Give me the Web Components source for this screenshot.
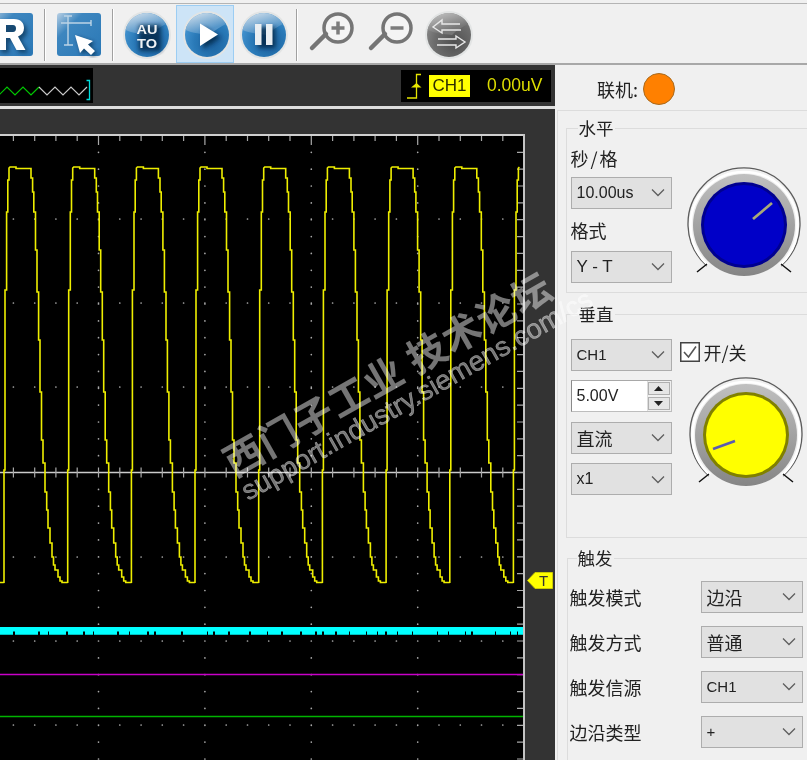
<!DOCTYPE html>
<html lang="zh-CN"><head><meta charset="utf-8"><title>Scope</title>
<style>
html,body{margin:0;padding:0;background:#f0f0f0;overflow:hidden}
body{width:807px;height:760px;font-family:"Liberation Sans","Noto Sans CJK SC",sans-serif}
</style></head><body>
<scope-app></scope-app>
<script>
const FONT='"Liberation Sans","Noto Sans CJK SC",sans-serif';
const CJK='"Noto Sans CJK SC","Liberation Sans",sans-serif';
function el(name,cls){customElements.define(name,cls)}
function shadow(host,html){host.attachShadow({mode:'open'}).innerHTML=html}
const DEFS=`<defs>
<radialGradient id="g" cx=".62" cy=".68" r=".75"><stop offset="0" stop-color="#1a609c"/><stop offset=".55" stop-color="#2a7ab8"/><stop offset="1" stop-color="#4a9ad6"/></radialGradient>
<radialGradient id="gg" cx=".62" cy=".68" r=".75"><stop offset="0" stop-color="#505050"/><stop offset=".6" stop-color="#6c6c6c"/><stop offset="1" stop-color="#8c8c8c"/></radialGradient>
<linearGradient id="hl" x1=".15" y1="0" x2=".55" y2=".75"><stop offset="0" stop-color="#d2e0ec"/><stop offset="1" stop-color="#5596c9"/></linearGradient>
<linearGradient id="hlg" x1=".15" y1="0" x2=".55" y2=".75"><stop offset="0" stop-color="#c4c4c4"/><stop offset="1" stop-color="#777"/></linearGradient>
<linearGradient id="tile" x1="0" y1="0" x2="1" y2="1"><stop offset="0" stop-color="#b9d0e4"/><stop offset=".3" stop-color="#3d86bf"/><stop offset="1" stop-color="#2a78b6"/></linearGradient>
<filter id="b" x="-30%" y="-30%" width="160%" height="160%"><feGaussianBlur stdDeviation="2"/></filter>
</defs>`;
function orb(g,hl,shape,inner){return `<svg width="50" height="50" viewBox="0 0 50 50">${DEFS}
<circle cx="25" cy="25" r="24" fill="#e2e4e4"/><circle cx="25" cy="25" r="22" fill="url(#${g})"/>
<path d="M3.500 20 A22 22 0 0 1 44 14 C38 17 33 20 28 25 C20 24 10 23 3.500 20Z" fill="url(#${hl})"/>
<path d="${shape}" transform="translate(3 3)" fill="#06233f" opacity=".75" filter="url(#b)"/>${inner}</svg>`}

el('tool-bar',class extends HTMLElement{connectedCallback(){shadow(this,`<style>
:host{display:flex;align-items:center;height:59px;box-sizing:content-box;background:#f0f0f0;border-top:1px solid #b4b4b4;border-bottom:2px solid #a8a8a8;margin-top:3px;overflow:hidden;flex:none}
.sep{width:1px;height:52px;background:#a0a0a0;flex:none;box-shadow:1px 0 0 #fff;margin-top:3px}
.i{flex:none;display:flex;align-items:center;justify-content:center;padding-top:3px}
.box{width:52px;height:54px;padding-left:4px;padding-top:2px;margin-top:1px;background:#cde4f7;border:1px solid #9ccdf3;display:flex;align-items:center;justify-content:center;flex:none}
svg{display:block}
</style>
<div class="i" style="width:34px;margin-right:10px;justify-content:flex-end"><svg width="34" height="46" viewBox="0 0 34 46">${DEFS}<rect x="-12" y="1" width="45" height="43" rx="3" fill="url(#tile)"/><path d="M1 10H16C23 10 27 14 27 19C27 23 25 26 21 27.500L28.500 41H19.500L13 29H9V41H1Z" fill="#06233f" opacity=".6" filter="url(#b)"/><path d="M-2 7H14C21 7 24 11 24 16C24 20 22 23 18 24.500L25.500 38H16.500L10 26H6V38H-2ZM6 13V20H13C15 20 16 18.500 16 16.500C16 14.500 15 13 13 13Z" fill="#fff"/></svg></div>
<div class="sep"></div>
<div class="i" style="width:46px;margin-left:11px;margin-right:10px"><svg width="46" height="46" viewBox="0 0 46 46">${DEFS}<rect x="1" y="1" width="44" height="43" rx="3" fill="url(#tile)"/><path d="M5 11H35M12 4V33M8 33H17M8 4H16M35 8V14" fill="none" stroke="#bcd4e6" stroke-width="1.400"/><path d="M21 25L39 31L34 34.500L41 41L37 45L30 38.500L26 43Z" fill="#06233f" opacity=".7" filter="url(#b)"/><path d="M19 23L37 29L32 32.500L39 39L35 43L28 36.500L24 41Z" fill="#fff"/></svg></div>
<div class="sep"></div>
<div class="i" style="width:50px;margin-left:9px;margin-right:4px">${orb('g','hl','M14 12H36V38H14Z',`<text x="25" y="24" text-anchor="middle" font-family='${FONT}' font-weight="700" font-size="12.500" textLength="21" lengthAdjust="spacingAndGlyphs" fill="#eef2f5">AU</text><text x="25" y="38.400" text-anchor="middle" font-family='${FONT}' font-weight="700" font-size="12.500" textLength="20" lengthAdjust="spacingAndGlyphs" fill="#eef2f5">TO</text>`)}</div>
<div class="box">${orb('g','hl','M18 13.500L36 24.500L18 36Z',`<path d="M18 13.500L36 24.500L18 36Z" fill="#fff"/>`)}</div>
<div class="i" style="width:50px;margin-left:5px;margin-right:7px">${orb('g','hl','M16 14H33.500V35H16Z',`<rect x="16" y="14" width="6.500" height="21" fill="#e9eef2"/><rect x="27" y="14" width="6.500" height="21" fill="#e9eef2"/>`)}</div>
<div class="sep"></div>
<div class="i" style="width:50px;margin-left:11px;padding-top:0;margin-top:-3px"><svg width="50" height="50" viewBox="0 0 50 50"><circle cx="30" cy="21" r="14" fill="#f4f4f4" stroke="#757575" stroke-width="3.500"/><path d="M18 27L4 41" stroke="#757575" stroke-width="4.500" stroke-linecap="round"/><path d="M23.500 21H36.500M30 14.500V27.500" stroke="#7c7c7c" stroke-width="3.500"/></svg></div>
<div class="i" style="width:50px;margin-left:9px;padding-top:0;margin-top:-3px"><svg width="50" height="50" viewBox="0 0 50 50"><circle cx="30" cy="21" r="14" fill="#f4f4f4" stroke="#757575" stroke-width="3.500"/><path d="M18 27L4 41" stroke="#757575" stroke-width="4.500" stroke-linecap="round"/><path d="M23.500 21H36.500" stroke="#7c7c7c" stroke-width="3.500"/></svg></div>
<div class="i" style="width:50px;margin-left:7px">${orb('gg','hlg','M0 0',`<path d="M36 14H18V10L9 17L18 23V20H37M14 29H32V26L41 32L32 38V35H13" fill="none" stroke="#e8e8e8" stroke-width="1.400"/>`)}</div>
`)}});

el('status-bar',class extends HTMLElement{connectedCallback(){
const pts=[];for(let x=-1,i=0;x<=88;x+=8,i++){pts.push([x,i%2?87:95])}
const gp=pts.filter(p=>p[0]<=40).map(p=>p.join(' ')).join('L'),wp=pts.filter(p=>p[0]>=39).map(p=>p.join(' ')).join('L');
shadow(this,`<style>
:host{display:flex;justify-content:space-between;align-items:center;height:41px;background:#333;flex:none;padding-right:4px;box-sizing:border-box}
.l{width:93px;height:35px;background:#000;flex:none}
.r{width:150px;height:32px;background:#000;display:flex;align-items:center;flex:none;font:17.500px ${FONT};color:#dede00;box-sizing:border-box;padding-left:6px}
.ch{background:#ff0;color:#2c2c00;height:22px;width:41px;line-height:22px;text-align:center;margin-left:6px;font-size:17px}
.v{margin-left:17px}
svg{display:block}
</style>
<div class="l"><svg width="93" height="35" viewBox="0 68 93 35"><path d="M${gp}" fill="none" stroke="#00c800" stroke-width="1.200"/><path d="M${wp}" fill="none" stroke="#c8c8c8" stroke-width="1.200"/><path d="M86.500 80.500H89.500V99.500H86.500" fill="none" stroke="#00dede" stroke-width="1.300"/></svg></div>
<div class="r"><svg width="16" height="28" viewBox="0 0 16 28"><path d="M0 26H9.500V2.500H14" fill="none" stroke="#e6e600" stroke-width="1.300"/><path d="M4 15.500H14.500L9.500 11Z" fill="#e6e600"/></svg><span class="ch">CH1</span><span class="v">0.00uV</span></div>`)}});

el('scope-screen',class extends HTMLElement{connectedCallback(){
const H=760-134;
const cx=98.5,dx=21.28,dy=16.85;
let dots='',ticks='';
for(let x=cx-5*dx;x<523;x+=dx){const m=((x-cx)%106.4+106.4)%106.4;ticks+=`M${x.toFixed(1)} 136V${(m<1||m>105.4)?145:141}`;
  ticks+=`M${x.toFixed(1)} 467.500V477.500`;
  for(const y of [219,303,387,557,641,725]) dots+=`M${x.toFixed(1)} ${y}h.01`;}
for(let k=0;k<4;k++){const x=cx+k*106.4;for(let y=472.5-19*dy;y<760;y+=dy){if(Math.abs(y-472.5)>3)dots+=`M${x.toFixed(1)} ${y.toFixed(1)}h.01`;}}
for(let y=472.5-19*dy;y<760;y+=dy){ticks+=`M517 ${y.toFixed(1)}H523`}
const shape=[[0,583],[0,470],[1,470],[1,290],[2.6,290],[2.6,212],[3.8,212],[3.8,180],[5,180],[5,168],[6,167],[12,167],[12,168.5],[27,168.5],[27,178],[28.6,178],[28.6,192],[29.8,192],[29.8,212],[31.5,212],[31.5,250],[33,250],[33,292],[34.6,292],[34.6,340],[36,340],[36,392],[37.5,392],[37.5,440],[39,440],[39,463],[41,463],[41,492],[42.7,492],[42.7,510],[44,510],[44,528],[46,528],[46,543],[48,543],[48,557],[49.5,557],[49.5,565],[51,565],[51,570],[54,570],[54,577],[56,577],[56,581],[58,581],[58,582.5],[63.6,582.5]];
const p=63.68;let d='';
for(let k=-1;k<9;k++){const t=4+k*p;shape.forEach(q=>{const x=t+q[0];if(x>522.5)return;d+=(d?'L':'M')+x.toFixed(1)+' '+q[1]})}
let gaps='';let seed=7;for(let x=0;x<523;){seed=(seed*137+59)%1009;const w=Math.min(4+seed%22,523-x);const gw=1+seed%2;gaps+=`M${x} 631h${w}v3.700h-${w}Z`;x+=w+gw}
shadow(this,`<style>
:host{display:block;position:relative;height:${H}px;background:#000;width:525px;flex:none;overflow:visible}
svg{display:block}
.t{position:absolute;left:527px;top:${572-134}px;width:26px;height:17px}
.t span{position:absolute;left:9px;top:0;width:15px;text-align:center;font:15px/17px ${FONT};color:#333}
</style>
<svg width="525" height="${H}" viewBox="0 134 525 ${H}">
<path d="M0 135H525" stroke="#cfcfcf" stroke-width="2"/><path d="M524 134V760" stroke="#c4c4c4" stroke-width="2"/>
<path d="M0 472.500H523" stroke="#cbcbcb" stroke-width="1.500"/>
<path d="${ticks}" stroke="#a8a8a8" stroke-width="1.200" fill="none"/>
<path d="${dots}" stroke="#a8a8a8" stroke-width="1.700" stroke-linecap="round" fill="none"/>
<path d="${d}" fill="none" stroke="#eeee00" stroke-width="1.600"/>
<rect x="0" y="627" width="523" height="4.500" fill="#00ffff"/><path d="${gaps}" fill="#00ffff"/>
<path d="M0 674.500H523" stroke="#c800c8" stroke-width="1.600"/>
<path d="M0 716.500H523" stroke="#00b400" stroke-width="1.600"/>
</svg>
<div class="t"><svg width="26" height="17" viewBox="0 0 26 17"><path d="M.5 8.500L8 .5H25.500V16.500H8Z" fill="#ffff00" stroke="#caca00"/></svg><span>T</span></div>`)}});

el('combo-box',class extends HTMLElement{connectedCallback(){
const w=this.getAttribute('w')||101,fs=this.getAttribute('fs')||16;
shadow(this,`<style>
:host{display:flex;align-items:center;justify-content:space-between;box-sizing:border-box;width:${w}px;height:32px;background:#e1e1e1;border:1.500px solid #adadad;padding:0 6px 0 5px;color:#222;font:${fs}px ${FONT};flex:none}
svg{display:block;flex:none}
</style><slot></slot><svg width="14" height="9" viewBox="0 0 14 9"><path d="M1 1.500L7 7.500L13 1.500" fill="none" stroke="#5e5e5e" stroke-width="1.300"/></svg>`)}});

el('spin-box',class extends HTMLElement{connectedCallback(){shadow(this,`<style>
:host{display:flex;align-items:stretch;box-sizing:border-box;width:101px;height:32px;background:#fff;border:1.500px solid #bdbdbd;border-left-color:#8a8a8a;border-top-color:#a8a8a8;color:#222;font:16px ${FONT};flex:none}
.v{flex:1;display:flex;align-items:center;padding-left:5px}
.b{width:24px;display:flex;flex-direction:column;gap:2px;padding:1px 1px 1px 0;background:#f0f0f0;box-sizing:border-box;border-left:1px solid #ddd}
.b div{flex:1;background:#e6e6e6;border:1px solid #b0b0b0;display:flex;align-items:center;justify-content:center}
svg{display:block}
</style><div class="v"><slot></slot></div><div class="b"><div><svg width="9" height="5"><path d="M0 5H9L4.500 0Z" fill="#222"/></svg></div><div><svg width="9" height="5"><path d="M0 0H9L4.500 5Z" fill="#222"/></svg></div></div>`)}});

el('check-box',class extends HTMLElement{connectedCallback(){shadow(this,`<style>
:host{display:flex;align-items:center;gap:4px;font:18px/20px ${CJK};color:#222;flex:none}
svg{display:block;flex:none}
</style><svg width="20" height="20" viewBox="0 0 20 20"><rect x=".75" y=".75" width="18.500" height="18.500" fill="#fff" stroke="#444" stroke-width="1.500"/><path d="M4 10L8.500 15L16 4.500" fill="none" stroke="#555" stroke-width="1.600"/></svg><slot></slot>`)}});

el('scope-knob',class extends HTMLElement{connectedCallback(){
const c=this.getAttribute('color'),rim=this.getAttribute('rim'),n=this.getAttribute('needle'),nc=this.getAttribute('nc');
shadow(this,`<style>:host{display:block;width:120px;height:120px;flex:none}svg{display:block}</style>
<svg width="120" height="120" viewBox="-60 -60 120 120"><defs><linearGradient id="r" x1="0" y1="0" x2="0" y2="1"><stop offset="0" stop-color="#c0c0c0"/><stop offset="1" stop-color="#858585"/></linearGradient></defs>
<path d="M-37 41A56 56 0 1 1 37 41" fill="none" stroke="#5c5c5c" stroke-width="1.300"/>
<path d="M-36 40A53.500 53.500 0 1 1 36 40" fill="none" stroke="#fff" stroke-width="2.500"/>
<path d="M-47 47L-37 39M47 47L37 39" stroke="#111" stroke-width="1.500"/>
<circle r="51" fill="url(#r)"/><circle r="43" fill="${rim}"/><circle r="40" fill="${c}"/>
<path d="${n}" stroke="${nc}" stroke-width="2.700"/></svg>`)}});

el('group-box',class extends HTMLElement{connectedCallback(){
const h=this.getAttribute('h');
shadow(this,`<style>
:host{display:block;flex:none;margin-left:${this.getAttribute('ml')||8}px;margin-top:${this.getAttribute('mt')||0}px;padding-top:13px;width:260px;font:18px ${CJK};color:#222}
.f{position:relative;box-sizing:border-box;height:${h}px;border:1.500px solid #dcdcdc;padding:${this.getAttribute('pad')||'0'};}
.leg{position:absolute;left:${this.getAttribute('ll')||10.5}px;top:-14px;background:#f0f0f0;padding:0 1px;line-height:26px;font-size:17.500px}
</style><div class="f"><div class="leg">${this.getAttribute('label')}</div><slot></slot></div>`)}});

el('side-panel',class extends HTMLElement{connectedCallback(){shadow(this,`<style>
:host{display:block;flex:none;width:252px;height:695px;background:#f0f0f0;overflow:hidden;font:18px ${CJK};color:#222;box-sizing:border-box}
.on{height:46px;display:flex;align-items:center;padding-left:40px;padding-top:2px;gap:5px;box-sizing:border-box;border-bottom:1.500px solid #dcdcdc;margin-left:2px}
.on i{display:block;width:32px;height:32px;border-radius:50%;background:#ff8000;border:1.500px solid #a86a1e;box-sizing:border-box}
.body{margin-left:2px;border-left:1px solid #dcdcdc;height:650px;display:flow-root}
.col{display:flex;flex-direction:column;align-items:flex-start}
.r{display:flex;align-items:flex-start}
.lab{height:26px;line-height:26px}
.trow{display:flex;align-items:center;justify-content:space-between;width:233px;height:32px}
</style>
<div class="on"><span>联机:</span><i></i></div>
<div class="body">
<group-box label="水平" h="165" mt="4" pad="16px 0 0 3.500px">
  <div class="r"><div class="col" style="width:112px">
    <div class="lab" style="margin-bottom:5.500px;word-spacing:-2px">秒 / 格</div>
    <combo-box>10.00us</combo-box>
    <div class="lab" style="margin:8px 0 8px">格式</div>
    <combo-box fs="17">Y - T</combo-box>
  </div><scope-knob style="margin:19.500px 0 0 1px" color="#0000c8" rim="#000090" nc="#a9a978" needle="M9 -6L28 -22"></scope-knob></div>
</group-box>
<group-box label="垂直" h="224" mt="8" pad="23.500px 0 0 3.500px">
  <div class="r"><div class="col" style="width:112px;gap:9.500px">
    <combo-box fs="15">CH1</combo-box>
    <spin-box>5.00V</spin-box>
    <combo-box fs="18" style="font-family:${CJK}">直流</combo-box>
    <combo-box>x1</combo-box>
  </div><div class="col" style="margin-left:-3px"><check-box style="margin-top:3px">开/关</check-box><scope-knob style="margin-top:13px;margin-left:6px" color="#ffff00" rim="#808000" nc="#5a5ab0" needle="M-11 6L-33 14"></scope-knob></div></div>
</group-box>
<group-box label="触发" h="300" mt="7" ml="9" ll="8.500" pad="21.500px 0 0 1.500px">
  <div class="col" style="gap:13px">
  <div class="trow"><span>触发模式</span><combo-box w="102" fs="18" style="font-family:${CJK}">边沿</combo-box></div>
  <div class="trow"><span>触发方式</span><combo-box w="102" fs="18" style="font-family:${CJK}">普通</combo-box></div>
  <div class="trow"><span>触发信源</span><combo-box w="102" fs="15">CH1</combo-box></div>
  <div class="trow"><span>边沿类型</span><combo-box w="102" fs="15">+</combo-box></div>
  </div>
</group-box>
</div>`)}});

el('water-mark',class extends HTMLElement{connectedCallback(){shadow(this,`<style>
:host{position:absolute;left:0;top:0;width:807px;height:760px;pointer-events:none;display:block;overflow:hidden}
div{position:absolute;transform-origin:0 100%;white-space:pre;color:rgba(255,255,255,.46);transform:rotate(-29.5deg)}
.a{left:238px;top:435px;font:700 39px/50px ${CJK};letter-spacing:1px}
.b{left:252px;top:474px;font:27.500px/34px ${FONT};-webkit-text-stroke:.5px rgba(255,255,255,.46)}
</style><div class="a">西门子工业 技术论坛</div><div class="b">support.industry.siemens.com/cs</div>`)}});

el('scope-app',class extends HTMLElement{connectedCallback(){shadow(this,`<style>
:host{display:flex;flex-direction:column;width:807px;height:760px;position:relative;overflow:hidden;filter:blur(.3px)}
.main{display:flex;flex:1;min-height:0}
.left{width:555px;flex:none;background:#333;display:flex;flex-direction:column;overflow:visible}
.rule{height:3px;background:#dedede;flex:none}
.gap{height:25px;flex:none}
</style>
<tool-bar></tool-bar>
<div class="main"><div class="left"><status-bar></status-bar><div class="rule"></div><div class="gap"></div><scope-screen></scope-screen></div><side-panel></side-panel></div>
<water-mark></water-mark>`)}});
</script></body></html>
